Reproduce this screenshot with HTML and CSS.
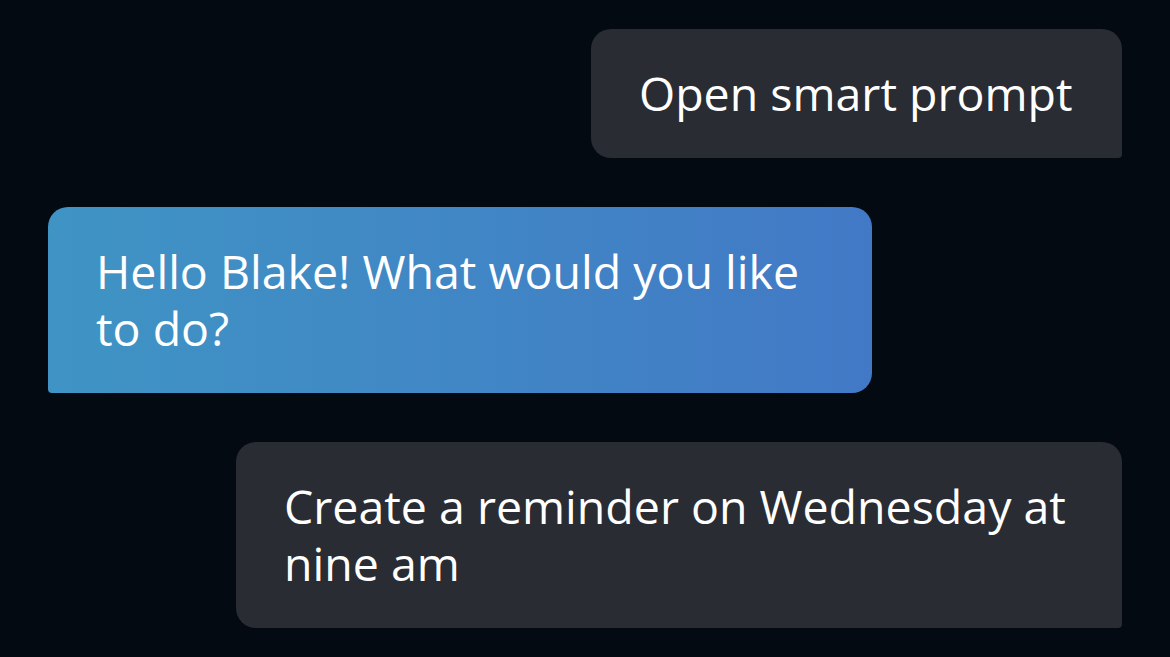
FILE: index.html
```html
<!DOCTYPE html>
<html>
<head>
<meta charset="utf-8">
<link rel="stylesheet" href="styles.css">
</head>
<body>
<div class="chat">
  <div class="bubble user b1">Open smart prompt</div>
  <div class="bubble bot b2">Hello Blake! What would you like to do?</div>
  <div class="bubble user b3">Create a reminder on Wednesday at nine am</div>
</div>
</body>
</html>
```

FILE: styles.css
```css
html, body {
  margin: 0;
  padding: 0;
  background: #040a12;
  width: 1170px;
  height: 657px;
  overflow: hidden;
}
.chat {
  display: flex;
  flex-direction: column;
  gap: 49px;
  padding: 29px 48px 0 48px;
}
.bubble {
  box-sizing: border-box;
  padding: 36px 48px;
  font-family: "Open Sans", "DejaVu Sans", sans-serif;
  font-size: 46.5px;
  line-height: 57px;
  color: #ffffff;
  border-radius: 20px;
}
.user {
  align-self: flex-end;
  background: #292c33;
  border-bottom-right-radius: 4px;
}
.bot {
  align-self: flex-start;
  background: linear-gradient(90deg, #3f94c4 0%, #4279c6 100%);
  border-bottom-left-radius: 4px;
}
.b1 { width: 531px; }
.b2 { width: 824px; }
.b3 { width: 886px; }
```
